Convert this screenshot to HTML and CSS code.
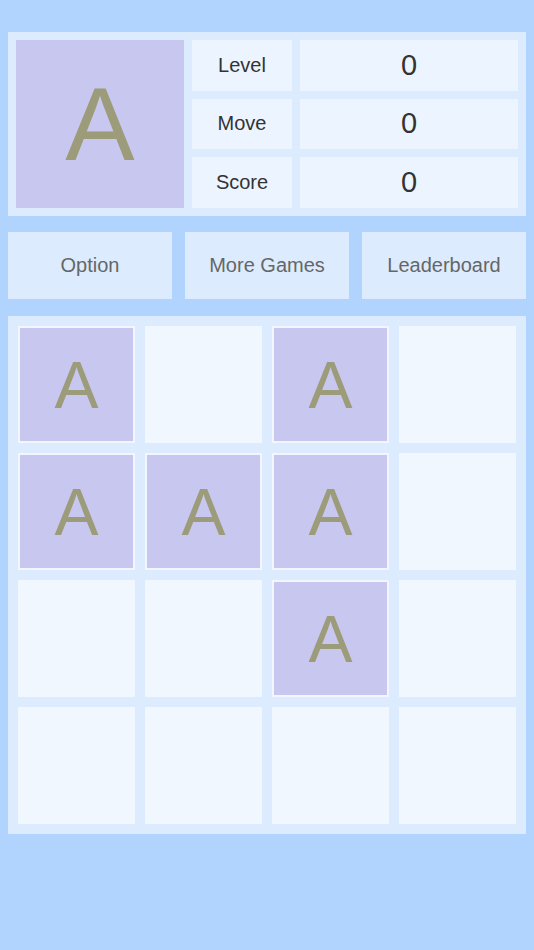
FILE: index.html
```html
<!DOCTYPE html>
<html lang="en">

<head>
    <meta charset="UTF-8">
    <meta name="viewport" content="width=device-width, initial-scale=1.0">
    <title>A Game</title>
    <link rel="stylesheet" href="styles.css">
</head>

<body>
    <section class="header">
        <div class="avatar">A</div>
        <div class="stats">
            <div class="label">Level</div>
            <div class="value">0</div>
            <div class="label">Move</div>
            <div class="value">0</div>
            <div class="label">Score</div>
            <div class="value">0</div>
        </div>
    </section>

    <nav class="menu">
        <button class="btn">Option</button>
        <button class="btn">More Games</button>
        <button class="btn">Leaderboard</button>
    </nav>

    <section class="board">
        <div class="cell tile">A</div>
        <div class="cell"></div>
        <div class="cell tile">A</div>
        <div class="cell"></div>

        <div class="cell tile">A</div>
        <div class="cell tile">A</div>
        <div class="cell tile">A</div>
        <div class="cell"></div>

        <div class="cell"></div>
        <div class="cell"></div>
        <div class="cell tile">A</div>
        <div class="cell"></div>

        <div class="cell"></div>
        <div class="cell"></div>
        <div class="cell"></div>
        <div class="cell"></div>
    </section>
</body>

</html>
```

FILE: styles.css
```css
body {
    margin: 0;
    padding: 32px 8px;
    background-color: #b0d4fe;
    font-family: "Liberation Sans", Arial, sans-serif;
}

.header {
    display: flex;
    gap: 8px;
    padding: 8px;
    background-color: #dcecfe;
}

.avatar {
    width: 168px;
    height: 168px;
    flex: none;
    display: flex;
    align-items: center;
    justify-content: center;
    background-color: #c8c7ef;
    color: #9c9c7a;
    font-size: 104px;
}

.stats {
    flex: 1;
    display: grid;
    grid-template-columns: 100px 1fr;
    grid-template-rows: repeat(3, 1fr);
    gap: 8px;
}

.label,
.value {
    display: flex;
    align-items: center;
    justify-content: center;
    background-color: #ecf5ff;
    color: #333;
}

.label {
    font-size: 20px;
}

.value {
    font-size: 29px;
}

.menu {
    display: flex;
    gap: 13px;
    margin: 16px 0 17px;
}

.btn {
    flex: 1;
    height: 67px;
    border: none;
    padding: 0;
    background-color: #dcecfe;
    color: #666;
    font-family: inherit;
    font-size: 20px;
    cursor: pointer;
}

.board {
    display: grid;
    grid-template-columns: repeat(4, 117px);
    grid-auto-rows: 117px;
    gap: 10px;
    padding: 10px;
    background-color: #dcecfe;
}

.cell {
    background-color: #f0f7ff;
}

.tile {
    display: flex;
    align-items: center;
    justify-content: center;
    border: 2px solid #f2f7ff;
    background-color: #c8c7ef;
    color: #9c9c7a;
    font-size: 66px;
}
```
